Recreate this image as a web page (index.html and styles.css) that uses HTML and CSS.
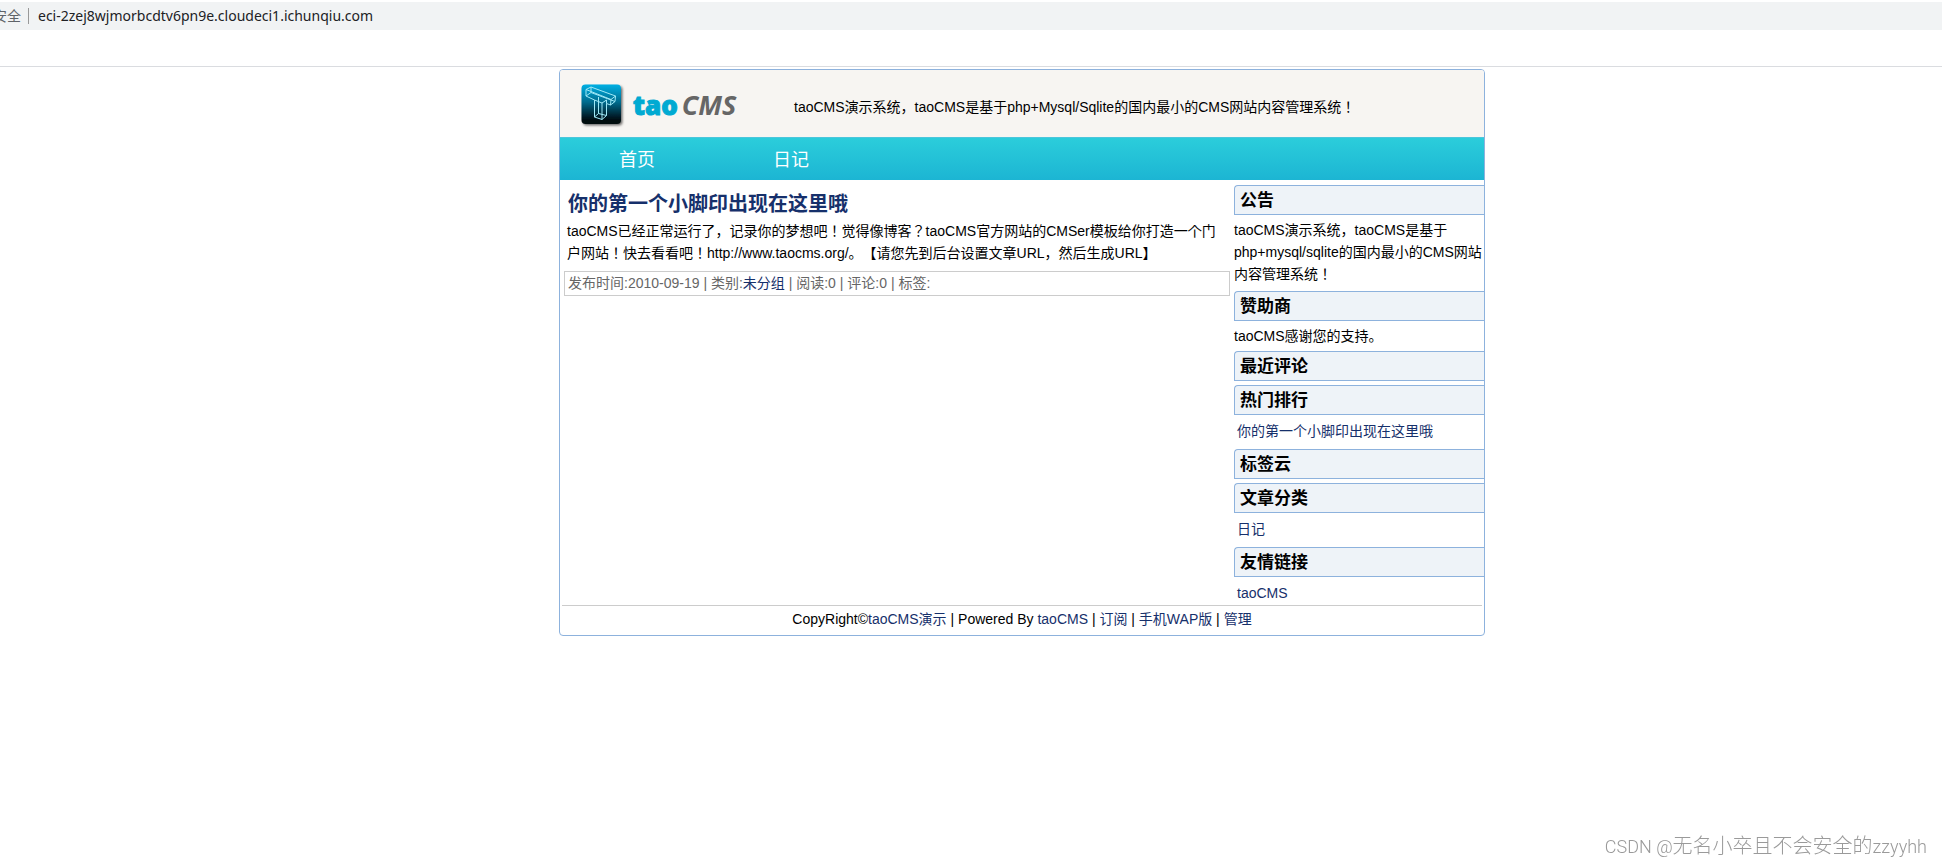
FILE: index.html
```html
<!DOCTYPE html>
<html>
<head>
<meta charset="utf-8">
<title>taoCMS演示</title>
<link rel="stylesheet" href="styles.css">
</head>
<body>
<div class="browser-bar">
  <span class="security">安全</span>
  <span class="address">eci-2zej8wjmorbcdtv6pn9e.cloudeci1.ichunqiu.com</span>
</div>
<div class="bookmarks"></div>
<div class="viewport">
  <div class="page">
    <header class="header">
      <a class="logo" href="#">
        <svg class="logo-mark" viewBox="0 0 44 44" aria-hidden="true">
          <defs>
            <linearGradient id="tile" x1="0" y1="0" x2="0" y2="1">
              <stop offset="0" stop-color="#06b0e4"/>
              <stop offset="0.45" stop-color="#046a8c"/>
              <stop offset="0.9" stop-color="#010a10"/>
            </linearGradient>
            <filter id="shadow" x="-20%" y="-20%" width="150%" height="150%">
              <feDropShadow dx="1.5" dy="1.5" stdDeviation="1" flood-color="#000" flood-opacity="0.55"/>
            </filter>
          </defs>
          <rect x="0.5" y="0.5" width="39.5" height="39.5" rx="4" fill="url(#tile)" filter="url(#shadow)"/>
          <g fill="none" stroke="#9fe9f7" stroke-width="1" stroke-linejoin="round">
            <path d="M5 5.500 L10 3 L34.500 12 L34 17.500 L29.500 21 L25.500 19.500 V31.500 L21 35.500 L13.500 33 V16 L5 12 Z"/>
            <path d="M5 5.500 L30 15.500 L29.500 21 M30 15.500 L34.500 12 M10 3 V8.500 L34 17.500 M5 12 L10 8.500 M13.500 16 L21 19 V35.500 M21 19 L25.500 16 V19.500 M13.500 33 L17.500 29.500 L25.500 31.500 M17.500 29.500 V13"/>
          </g>
        </svg>
        <span class="logo-tao">tao</span><span class="logo-cms">CMS</span>
      </a>
      <p class="tagline">taoCMS演示系统，taoCMS是基于php+Mysql/Sqlite的国内最小的CMS网站内容管理系统！</p>
    </header>
    <nav class="nav">
      <a href="#">首页</a>
      <a href="#">日记</a>
    </nav>
    <div class="columns">
      <main class="main">
        <h1 class="title"><a href="#">你的第一个小脚印出现在这里哦</a></h1>
        <p class="excerpt">taoCMS已经正常运行了，记录你的梦想吧！觉得像博客？taoCMS官方网站的CMSer模板给你打造一个门户网站！快去看看吧！http://www.taocms.org/。【请您先到后台设置文章URL，然后生成URL】</p>
        <div class="meta">发布时间:2010-09-19 | 类别:<a href="#">未分组</a> | 阅读:0 | 评论:0 | 标签:</div>
      </main>
      <aside class="side">
        <h2>公告</h2>
        <p class="notice">taoCMS演示系统，taoCMS是基于php+mysql/sqlite的国内最小的CMS网站内容管理系统！</p>
        <h2>赞助商</h2>
        <p>taoCMS感谢您的支持。</p>
        <h2>最近评论</h2>
        <h2>热门排行</h2>
        <ul><li><a href="#">你的第一个小脚印出现在这里哦</a></li></ul>
        <h2>标签云</h2>
        <h2>文章分类</h2>
        <ul><li><a href="#">日记</a></li></ul>
        <h2>友情链接</h2>
        <ul><li><a href="#">taoCMS</a></li></ul>
      </aside>
    </div>
    <footer class="footer">CopyRight©<a href="#">taoCMS演示</a> | Powered By <a href="#">taoCMS</a> | <a href="#">订阅</a> | <a href="#">手机WAP版</a> | <a href="#">管理</a></footer>
  </div>
</div>
<div class="watermark"><span class="latin">CSDN @</span>无名小卒且不会安全的<span class="latin">zzyyhh</span></div>
</body>
</html>
```
FILE: styles.css
```css
* {
  box-sizing: border-box;
}

body {
  margin: 0;
  background: #fff;
  color: #000;
  font: 14px/22px "Liberation Sans", "Noto Sans CJK SC", sans-serif;
  text-spacing-trim: space-all;
}

h1, h2, p, ul {
  margin: 0;
  padding: 0;
}

a {
  color: #16306b;
  text-decoration: none;
}

.browser-bar {
  display: flex;
  align-items: center;
  height: 28px;
  margin-top: 2px;
  background: #f1f3f4;
  font-family: "Noto Sans", "Noto Sans CJK SC", sans-serif;
  overflow: hidden;
}

.security {
  margin-left: -7px;
  padding-right: 7px;
  border-right: 1px solid #999;
  color: #5f6368;
  line-height: 16px;
}

.address {
  padding-left: 9px;
  color: #202124;
}

.bookmarks {
  height: 37px;
  border-bottom: 1px solid #dadce0;
}

.viewport {
  padding: 2px 0 0 102px;
}

.page {
  max-width: 926px;
  margin: 0 auto;
  border: 1px solid #8db2dd;
  border-radius: 4px;
  overflow: hidden;
}

.header {
  display: flex;
  align-items: center;
  height: 67px;
  padding-left: 21px;
  background: #f7f5f2;
}

.logo {
  display: flex;
  align-items: center;
  width: 213px;
}

.logo-mark {
  width: 44px;
  height: 44px;
  margin: 4px 8px 0 0;
}

.logo-tao {
  padding-top: 2px;
  color: #00aad2;
  font: 800 26px/40px "Open Sans", sans-serif;
  -webkit-text-stroke: 1px #00aad2;
}

.logo-cms {
  padding: 2px 0 0 4px;
  color: #666;
  font: italic bold 27px/40px "Open Sans", sans-serif;
}

/* Full-width ！ and ？ sit in the middle of their box in running text. */
.tagline,
.excerpt,
.notice {
  font-family: "Liberation Sans", "Noto Sans CJK JP", "Noto Sans CJK SC", sans-serif;
}

.tagline {
  padding-top: 7px;
}

.nav {
  display: flex;
  height: 43px;
  background: linear-gradient(#2bcddb, #1cb5d3);
  border-top: 1px solid #4cc6dc;
}

.nav a {
  width: 154px;
  color: #fff;
  font-size: 18px;
  line-height: 44px;
  text-align: center;
}

.columns {
  display: flex;
  gap: 4px;
}

.main {
  flex: 1;
  padding: 8px 0 0 4px;
}

.title {
  padding-left: 4px;
  font-size: 20px;
  line-height: 32px;
}

.excerpt {
  padding: 0 9px 7px 3px;
}

.meta {
  padding: 0 3px;
  border: 1px solid #ccc;
  color: #666;
  line-height: 23px;
}

.side {
  width: 250px;
  padding-top: 1px;
}

.side h2 {
  height: 30px;
  margin: 4px 0;
  padding-left: 5px;
  background: #eef3f8;
  border: 1px solid #8db2dd;
  border-right: 0;
  border-top-left-radius: 4px;
  font-size: 17px;
  line-height: 30px;
}

.side .notice {
  padding-bottom: 2px;
}

.side ul {
  margin-bottom: 6px;
  padding-left: 3px;
  list-style: none;
}

.side ul:last-child {
  margin-bottom: 0;
}

.side li {
  line-height: 24px;
}

.footer {
  margin: 0 2px;
  padding: 2px 0 5px;
  border-top: 1px solid #ccc;
  text-align: center;
}

.watermark {
  position: fixed;
  right: 15px;
  bottom: 5px;
  color: #9a9a9a;
  font: 300 20px/28px "Noto Sans CJK SC", sans-serif;
}

.watermark .latin {
  font: 300 18px/28px Roboto, sans-serif;
}
```
